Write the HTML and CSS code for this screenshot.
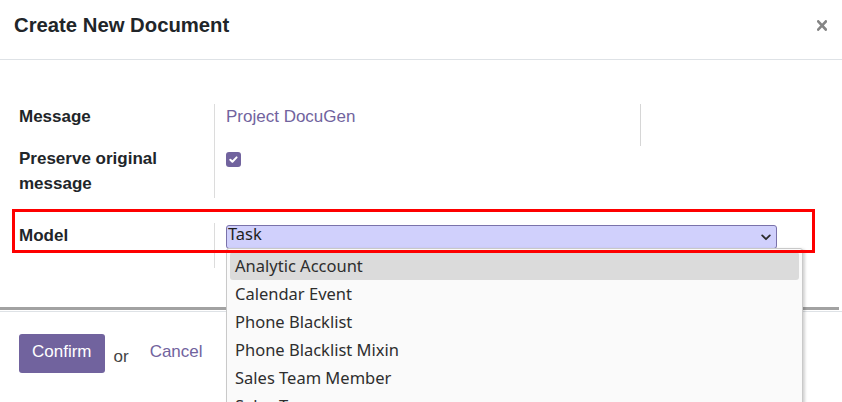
FILE: index.html
```html
<!DOCTYPE html>
<html>
<head>
<meta charset="utf-8">
<link rel="stylesheet" href="styles.css">
</head>
<body>
<div class="modal">
  <header class="modal-header">
    <h4 class="title">Create New Document</h4>
    <button class="close" aria-label="Close">
      <svg width="10" height="11" viewBox="0 0 10 11"><path d="M1.2 1.5 L8.8 9.5 M8.8 1.5 L1.2 9.5" stroke="#858585" stroke-width="2.6" stroke-linecap="square" fill="none"/></svg>
    </button>
  </header>
  <main class="modal-body">
    <div class="group g1">
      <div class="lbl r1">Message</div>
      <div class="val r1"><div class="msg">Project DocuGen</div></div>
      <div class="lbl r2">Preserve original message</div>
      <div class="val r2">
        <span class="check"><svg width="15" height="15" viewBox="0 0 15 15"><path d="M4.3 7.7 L6.4 9.8 L10.6 5.4" stroke="#fff" stroke-width="2" fill="none" stroke-linecap="round" stroke-linejoin="round"/></svg></span>
      </div>
    </div>
    <div class="group g2">
      <div class="annot"></div>
      <div class="lbl r3">Model</div>
      <div class="val r3">
        <div class="select">
          <span class="sel-text">Task</span>
          <svg class="chev" width="10" height="7" viewBox="0 0 10 7"><path d="M1.2 1.4 L5 5.2 L8.8 1.4" stroke="#2b2b2b" stroke-width="1.8" fill="none" stroke-linecap="round" stroke-linejoin="round"/></svg>
          <ul class="dropdown">
            <li class="active">Analytic Account</li>
            <li>Calendar Event</li>
            <li>Phone Blacklist</li>
            <li>Phone Blacklist Mixin</li>
            <li>Sales Team Member</li>
            <li>Sales Team</li>
            <li>Task</li>
          </ul>
        </div>
      </div>
    </div>
    <div class="hscroll"></div>
  </main>
  <footer class="modal-footer">
    <button class="btn-primary">Confirm</button>
    <span class="or">or</span>
    <a class="cancel">Cancel</a>
  </footer>
</div>
</body>
</html>
```
FILE: styles.css
```css
html, body {
  margin: 0;
  padding: 0;
  background: #fff;
  overflow: hidden;
  height: 402px;
}
body {
  font-family: "Liberation Sans", Arial, sans-serif;
  color: #212529;
}
.modal {
  width: 842px;
}
.modal-header {
  display: flex;
  justify-content: space-between;
  align-items: flex-start;
  height: 46px;
  padding: 13px 15px 0 14px;
  border-bottom: 1px solid #dee2e6;
}
.title {
  margin: 0;
  font-size: 20.3px;
  line-height: 24px;
  font-weight: bold;
  color: #212529;
}
.close {
  border: 0;
  background: none;
  padding: 0;
  margin-top: 7px;
  width: 10px;
  height: 11px;
  display: block;
}
.close svg { display: block; }

.modal-body {
  padding-top: 44px;
}
.group {
  display: grid;
  grid-template-columns: 215px 1fr;
}
.lbl {
  box-sizing: border-box;
  padding: 0 10px 0 19px;
  border-right: 1px solid #dcdcdc;
  font-weight: bold;
  font-size: 17px;
  line-height: 25px;
}
.val {
  padding-left: 11px;
  font-size: 17px;
  line-height: 25px;
}
.r1 { height: 42px; }
.msg {
  box-sizing: border-box;
  width: 415px;
  height: 42px;
  border-right: 1px solid #d6d6d6;
  color: #71639e;
}
.r2 { height: 52px; }
.check {
  display: block;
  width: 15px;
  height: 15px;
  margin-top: 6px;
  background: #71639e;
  border-radius: 3px;
}
.check svg { display: block; }

.g2 {
  margin-top: 25px;
  position: relative;
}
.r3 { height: 45px; }
.val.r3 { padding-right: 65px; }
.annot {
  position: absolute;
  left: 12px;
  top: -14px;
  width: 803px;
  height: 44px;
  box-sizing: border-box;
  border: 3px solid #fe0000;
  z-index: 5;
  pointer-events: none;
}
.select {
  position: relative;
  box-sizing: border-box;
  margin-top: 2px;
  height: 24px;
  background: #d0d0fc;
  border: 1px solid #7a72aa;
  border-radius: 3px;
  display: flex;
  justify-content: space-between;
  align-items: flex-start;
  padding: 0 4px 0 1px;
  font-family: "Noto Sans", "DejaVu Sans", sans-serif;
  font-size: 16.5px;
  line-height: 16px;
  color: #1f1f1f;
}
.sel-text { display: block; }
.chev {
  display: block;
  margin-top: 8px;
  margin-right: 1px;
}
.dropdown {
  position: absolute;
  left: -1px;
  top: 22px;
  width: 577px;
  box-sizing: border-box;
  margin: 0;
  padding: 3px;
  list-style: none;
  background: #fafafa;
  border: 1px solid #c9c9c9;
  border-radius: 3px 3px 0 0;
  box-shadow: 2px 1px 3px rgba(0, 0, 0, 0.18);
  z-index: 3;
  font-family: "Noto Sans", "DejaVu Sans", sans-serif;
  font-size: 16.5px;
  line-height: 28px;
  color: #2e2e2e;
}
.dropdown li {
  height: 28px;
  padding-left: 5px;
  border-radius: 3px;
  white-space: nowrap;
}
.dropdown li.active {
  background: #dbdbdb;
}

.hscroll {
  margin-top: 39px;
  margin-right: 3px;
  height: 3px;
  background: #a2a2a2;
  margin-bottom: 1px;
}
.modal-footer {
  border-top: 1px solid #dee2e6;
  padding: 22px 19px;
  display: flex;
  align-items: flex-start;
}
.btn-primary {
  border: 0;
  margin: 0;
  background: #71639e;
  color: #fff;
  border-radius: 3px;
  font-family: "Liberation Sans", Arial, sans-serif;
  font-size: 17px;
  line-height: 25px;
  padding: 5px 13px 9px;
}
.or {
  margin-left: 9px;
  padding-top: 10px;
  font-size: 17px;
  line-height: 25px;
  color: #444;
}
.cancel {
  margin-left: 21px;
  padding-top: 5px;
  font-size: 17px;
  line-height: 25px;
  color: #71639e;
}
```
